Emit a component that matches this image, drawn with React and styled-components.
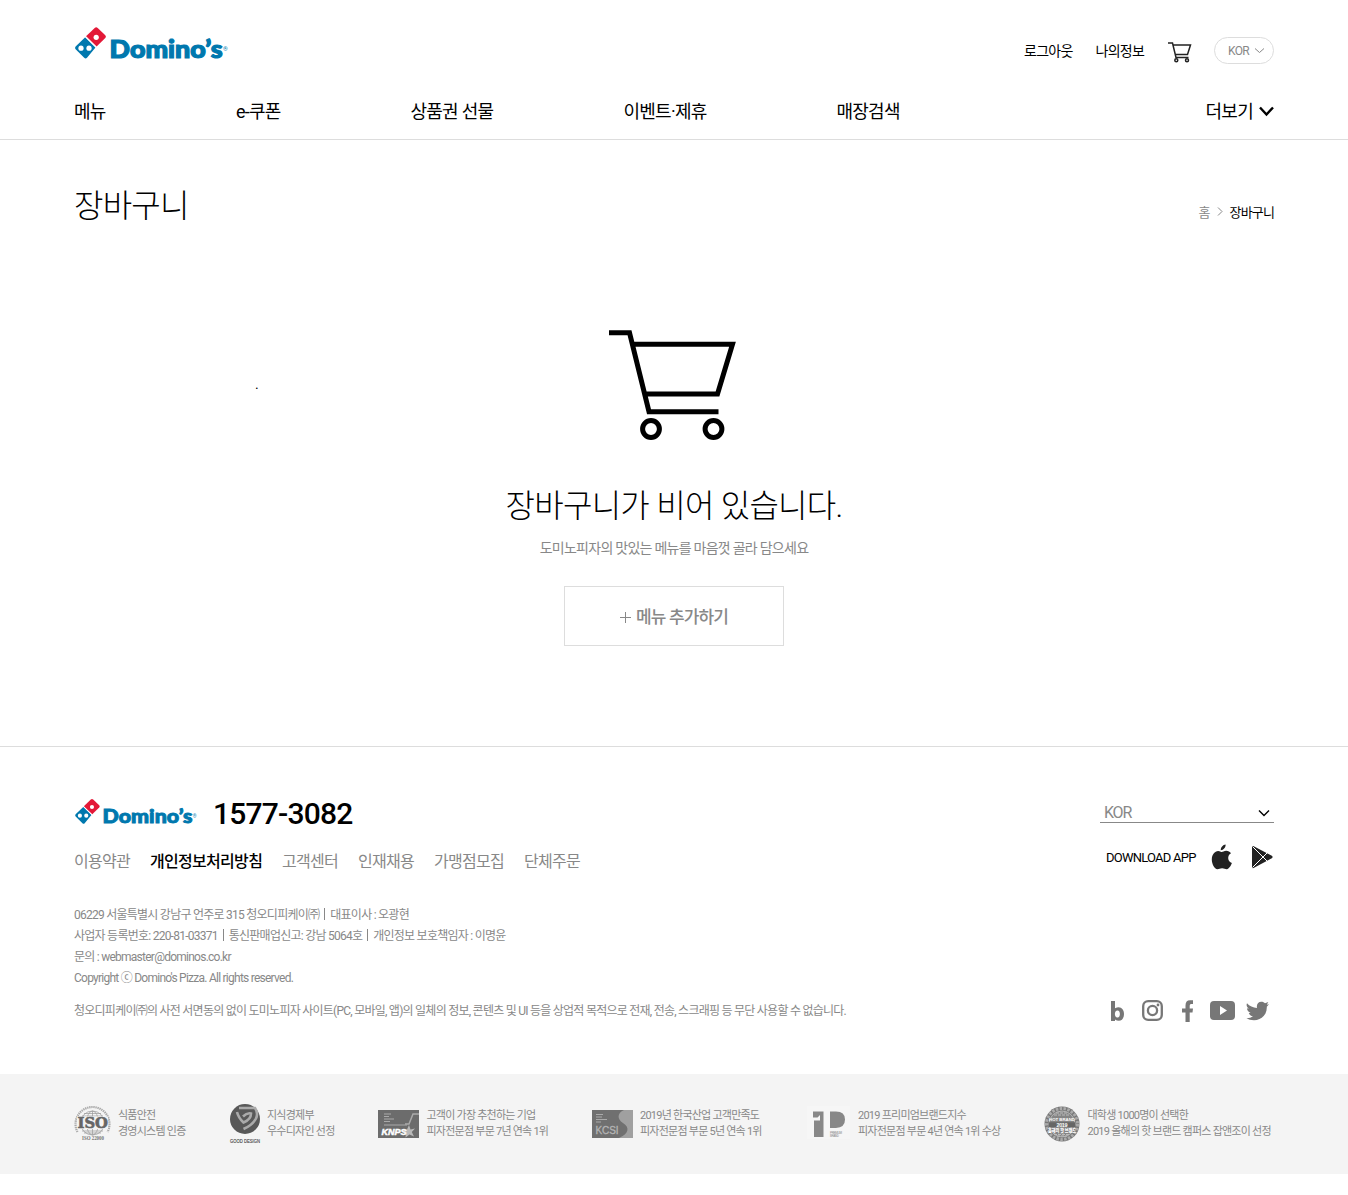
import React from "react";
import styled, { createGlobalStyle } from "styled-components";

const GlobalStyle = createGlobalStyle`
  * { box-sizing: border-box; }
  body {
    margin: 0;
    background: #fff;
    color: #000;
    font-family: Roboto, "Noto Sans CJK KR", sans-serif;
    font-size: 14px;
    letter-spacing: -0.05em;
  }
  a { color: inherit; text-decoration: none; }
  ul, p, h1, h2 { margin: 0; padding: 0; list-style: none; font-weight: 400; }
  svg { display: block; flex: none; overflow: visible; }
`;

const Page = styled.div`
  height: 1195px;
  overflow: hidden;
`;

const Container = styled.div`
  width: 1200px;
  margin: 0 auto;
`;

const Header = styled.header`
  height: 140px;
  border-bottom: 1px solid #ddd;
`;

const HeaderTop = styled(Container)`
  display: flex;
  justify-content: space-between;
  align-items: flex-start;
  height: 93px;
  padding-top: 26px;
`;

const UserMenu = styled.div`
  display: flex;
  align-items: center;
  height: 27px;
  margin-top: 11px;
  line-height: 27px;
  letter-spacing: -0.7px;
`;

const UserLink = styled.a`
  width: ${(p) => p.$width}px;
  padding-top: 1px;
  white-space: nowrap;
`;

const CartLink = styled.a`
  width: 46px;
  padding-top: 3px;
`;

const LangButton = styled.button`
  display: flex;
  align-items: center;
  gap: 5px;
  width: 60px;
  height: 27px;
  padding: 0 0 0 13px;
  border: 1px solid #ddd;
  border-radius: 14px;
  background: #fff;
  color: #888;
  font: 12px Roboto, sans-serif;
  letter-spacing: -0.7px;
`;

const Nav = styled(Container)`
  display: flex;
  font-size: 18px;
  line-height: 38px;
  letter-spacing: -0.75px;
`;

const NavItem = styled.a`
  width: ${(p) => p.$width}px;
  white-space: nowrap;
`;

const More = styled.a`
  display: flex;
  align-items: center;
  gap: 6px;
  margin-left: auto;
  svg { margin-top: -2px; }
`;

const TitleRow = styled(Container)`
  display: flex;
  justify-content: space-between;
  height: 190px;
  padding-top: 42px;
`;

const Title = styled.h1`
  font-size: 32px;
  font-weight: 300;
  line-height: 48px;
  letter-spacing: -0.8px;
`;

const Breadcrumb = styled.div`
  display: flex;
  align-items: center;
  gap: 7px;
  height: 20px;
  margin-top: 19px;
  font-size: 13px;
  letter-spacing: -0.85px;
  color: #888;
  strong { font-weight: 400; color: #000; }
`;

const Main = styled.main`
  height: 606px;
`;

const CartStage = styled(Container)`
  display: grid;
  grid-template-columns: 1fr 127px 1fr;
  padding-right: 3px;
`;

const StrayMark = styled.span`
  padding: 44px 0 0 181px;
  line-height: 20px;
`;

const Empty = styled.section`
  display: flex;
  flex-direction: column;
  align-items: center;
  padding-top: 41px;
`;

const EmptyTitle = styled.h2`
  font-size: 32px;
  font-weight: 300;
  line-height: 48px;
  letter-spacing: -0.72px;
`;

const EmptyText = styled.p`
  margin-top: 8px;
  line-height: 20px;
  letter-spacing: -0.74px;
  color: #888;
`;

const AddButton = styled.button`
  display: flex;
  align-items: center;
  justify-content: center;
  gap: 5px;
  width: 220px;
  height: 60px;
  margin-top: 28px;
  padding: 0 6px 2px;
  border: 1px solid #ddd;
  background: #fff;
  color: #888;
  font: 500 17px Roboto, "Noto Sans CJK KR", sans-serif;
  letter-spacing: -0.85px;
  svg { margin-top: 4px; }
`;

const Footer = styled.footer`
  border-top: 1px solid #ddd;
`;

const FooterBody = styled(Container)`
  display: flex;
  justify-content: space-between;
  height: 327px;
`;

const FooterInfo = styled.div`
  display: flex;
  flex-direction: column;
`;

const Brand = styled.div`
  display: flex;
  gap: 16px;
  height: 91px;
  padding-top: 51px;
`;

const Phone = styled.span`
  font-size: 30px;
  font-weight: 500;
  line-height: 32px;
  letter-spacing: -0.78px;
`;

const FooterLinks = styled.ul`
  display: flex;
  font-size: 16px;
  line-height: 24px;
  margin-top: 12px;
`;

const FooterLink = styled.li`
  width: ${(p) => p.$width}px;
  white-space: nowrap;
  font-weight: ${(p) => (p.$strong ? 500 : 400)};
  color: ${(p) => (p.$strong ? "#000" : "#888")};
`;

const Address = styled.div`
  margin-top: 31px;
  font-size: 12px;
  line-height: 21px;
  letter-spacing: -0.75px;
  color: #888;
  white-space: nowrap;
`;

const AddressLine = styled.p`
  height: 21px;
  display: flex;
  align-items: center;
`;

const Divider = styled.i`
  width: 1px;
  height: 12px;
  margin: -3px 5px 0;
  background: #888;
`;

const Notice = styled.p`
  margin-top: 12px;
  font-size: 12px;
  line-height: 21px;
  letter-spacing: -0.75px;
  color: #888;
  white-space: nowrap;
`;

const FooterSide = styled.div`
  display: flex;
  flex-direction: column;
  width: 174px;
  padding-top: 56px;
`;

const LangSelect = styled.div`
  display: flex;
  justify-content: space-between;
  align-items: center;
  height: 20px;
  padding: 0 4px;
  border-bottom: 1px solid #888;
  color: #888;
  font-size: 16px;
  letter-spacing: -1.2px;
`;

const Download = styled.div`
  display: flex;
  align-items: center;
  height: 28px;
  margin-top: 20px;
  padding-left: 6px;
  font-size: 13px;
  letter-spacing: -0.77px;
  white-space: nowrap;
`;

const DownloadLabel = styled.span`
  width: 105px;
`;

const AppleLink = styled.a`
  width: 41px;
`;

const Social = styled.div`
  display: flex;
  align-items: center;
  height: 24px;
  margin-top: 128px;
`;

const Awards = styled.div`
  height: 100px;
  background: #f4f4f4;
`;

const AwardRow = styled(Container)`
  display: flex;
`;

const Award = styled.div`
  display: flex;
  width: ${(p) => p.$width}px;
  padding-top: 29px;
`;

const AwardIcon = styled.div`
  width: ${(p) => p.$width}px;
  flex: none;
`;

const AwardText = styled.p`
  padding-top: 5px;
  font-size: 11px;
  line-height: 16px;
  letter-spacing: -0.76px;
  color: #888;
  white-space: pre;
`;

function Logo({ width, height }) {
  return (
    <svg width={width} height={height} viewBox="0 0 154 34">
      <path fill="#e31837" d="M12 10.3 20.7 1.9Q22.2 .6 23.7 1.9L31.3 9.2Q32.6 10.6 31.3 12L22.6 20.6Z" />
      <path fill="#0078ae" d="M11.2 11.2 21.5 21.5 13 31.8Q11.6 33.2 10.2 31.8L1.6 23.3Q.4 21.9 1.6 20.5Z" />
      <path stroke="#fff" strokeWidth="1.1" d="M11.2 10.4 22.5 21.6" />
      <circle cx="22.2" cy="11.3" r="2.6" fill="#fff" />
      <circle cx="7" cy="22.2" r="2.6" fill="#fff" />
      <circle cx="15" cy="22.2" r="2.6" fill="#fff" />
      <text x="35.6" y="32" textLength="113" lengthAdjust="spacingAndGlyphs" fill="#0078ae" stroke="#0078ae" strokeWidth="1.2" fontFamily="Lato, sans-serif" fontWeight="900" fontSize="24.5" letterSpacing="0">Domino’s</text>
      <text x="149" y="25" fill="#0078ae" fontFamily="Roboto, sans-serif" fontSize="6" letterSpacing="0">®</text>
    </svg>
  );
}

function BigCart() {
  return (
    <svg width="127" height="111" viewBox="0 0 127 111" fill="none" stroke="#000" strokeWidth="5">
      <path d="M0 2.7H20.5L40 81.7H109.5M24.5 14.2H123.5L108.5 64H37" />
      <circle cx="42" cy="99" r="8.4" />
      <circle cx="104.5" cy="99" r="8.4" />
    </svg>
  );
}

function SmallCart() {
  return (
    <svg width="24" height="21" viewBox="0 0 24 21" fill="none" stroke="#222" strokeWidth="1.5">
      <path d="M0 1H4.5L8 15.5H20.5M5 3H22.5L19.5 12.5H7" />
      <circle cx="8.3" cy="18.3" r="1.5" />
      <circle cx="19" cy="18.3" r="1.5" />
    </svg>
  );
}

function Chevron({ width, height, stroke, weight }) {
  return (
    <svg width={width} height={height} viewBox={`0 0 ${width} ${height}`} fill="none" stroke={stroke} strokeWidth={weight}>
      <path d={`M1 1.5 ${width / 2} ${height - 1.5} ${width - 1} 1.5`} />
    </svg>
  );
}

function AppleIcon() {
  return (
    <svg width="22" height="26" viewBox="0 0 22 26" fill="#222">
      <path d="M14.6 .6C14.9 3.3 12.6 6.2 9.8 6.3 9.5 3.5 12 .9 14.6 .6ZM10.7 8.1C11.8 8.1 13 6.8 15.2 6.8 17.2 6.8 19 7.8 20 9.3 15.8 11.8 16.6 17.5 20.9 19.1 19.8 22 17.9 25 15.9 25.2 14.2 25.3 13.3 24.3 11.1 24.3 8.9 24.3 8.2 25.2 6.5 25.2 3.4 25.1 .8 19.8 .8 15.4 .8 10.6 3.8 7 7.2 7 8.8 7 9.9 8.1 10.7 8.1Z" />
    </svg>
  );
}

function PlayIcon() {
  return (
    <svg width="21" height="24" viewBox="0 0 21 24">
      <path fill="#222" d="M0 1.8Q0 .5 1.3 1.1L16 8.8 19.8 10.8Q21.3 11.8 19.8 13.2L1.6 23Q0 23.6 0 22Z" />
      <path stroke="#fff" strokeWidth="1" d="M.5 1.5 15.5 16.5M.5 22.5 15.5 7.5" />
    </svg>
  );
}

function SocialIcons() {
  return (
    <svg width="174" height="24" viewBox="0 0 174 24" fill="#777">
      <path fillRule="evenodd" d="M11 2H15V9.2C20.5 6.5 24 10 24 15 24 21.5 19 23.5 15 20.5V22H11ZM17.5 11.5C14 11.5 14 18.5 17.5 18.5 20.7 18.5 20.7 11.5 17.5 11.5Z" />
      <g fill="none" stroke="#777" strokeWidth="2.3">
        <rect x="43.2" y="2.2" width="18.6" height="18.6" rx="5" />
        <circle cx="52.5" cy="11.5" r="4.6" />
      </g>
      <circle cx="58" cy="6" r="1.4" />
      <path d="M85.5 23V13.5H82V9.5H85.5V6.5Q85.5 1.2 90 1.2H93V5H91Q89.7 5 89.7 6.7V9.5H93L92.5 13.5H89.7V23Z" />
      <path fillRule="evenodd" d="M114 2H131Q135 2 135 6V17Q135 21 131 21H114Q110 21 110 17V6Q110 2 114 2ZM120 7V16L127 11.5Z" />
      <path d="M147 4.2C149.5 7 153 8.8 157 9 156.2 5 158.4 2.8 161.3 2.8 163 2.8 164.2 3.5 165 4.3L168.3 3.1 166.8 5.7 169 5.2 166.8 7.7C167.2 15.5 161.5 21.2 154 21.2 151 21.2 148.6 20.5 146.4 19.2 149 19.3 151.2 18.7 153 17.3 150.8 17 149.4 15.8 148.8 14L150.6 13.9C148.3 13 147.1 11.4 147 9.3L149 9.8C147 8.2 146 6.6 147 4.2Z" />
    </svg>
  );
}

const badgeFont = { fontFamily: "Liberation Sans, sans-serif", letterSpacing: 0 };

function IsoBadge() {
  return (
    <svg width="38" height="40" viewBox="0 0 38 40" {...badgeFont}>
      <g fill="none" stroke="#999" strokeWidth=".7">
        <circle cx="18.5" cy="20" r="12" />
        <ellipse cx="18.5" cy="20" rx="6" ry="12" />
        <path d="M18.5 8V32M8 13H29M8 28H29M10 10.5H27M10 30H27" />
        <path d="M3.5 29A17 17 0 1 1 33.5 29" strokeWidth="2.2" strokeDasharray="1.4 .7" stroke="#aaa" />
      </g>
      <rect x="3" y="13.5" width="31" height="12.5" fill="#f4f4f4" />
      <text x="3.5" y="25" fontFamily="DejaVu Serif, serif" fontWeight="700" fontSize="14.5" fill="#666" stroke="#666" strokeWidth=".6" textLength="30.5" lengthAdjust="spacingAndGlyphs">ISO</text>
      <text x="8" y="37.3" fontFamily="Liberation Serif, serif" fontSize="5.5" fontWeight="700" fill="#777" textLength="22" lengthAdjust="spacingAndGlyphs">ISO 22000</text>
    </svg>
  );
}

function DesignBadge() {
  return (
    <svg width="31" height="41" viewBox="0 0 31 41" {...badgeFont}>
      <circle cx="15" cy="16" r="15" fill="#585858" />
      <g fill="none" stroke="#aaa" strokeWidth="2.6">
        <path d="M9 5H25Q28.5 10 26 15.5 22.5 22 13.5 26" />
        <path d="M7 9Q8.5 15 13.5 19.5 21 16.5 21 10.5 17 9.5 13 13.5" />
      </g>
      <text x="0" y="39.8" fontSize="6" fill="#444" stroke="#444" strokeWidth=".15" textLength="30" lengthAdjust="spacingAndGlyphs">GOOD DESIGN</text>
    </svg>
  );
}

function KnpsBadge() {
  return (
    <svg width="41" height="36" viewBox="0 0 41 36" {...badgeFont}>
      <path fill="#6c6c6c" d="M0 7H41V35H0Z" />
      <path stroke="#aaa" strokeWidth="1" d="M6 11H13M6 13.5H11M6 16H16M6 18.5H12M6 22H29" />
      <path fill="none" stroke="#aaa" strokeWidth="1.5" d="M27 21H31L35 11H41" />
      <path fill="#b9b9b9" d="m31 22 1.5 4.5 4.5-1-3.2 3.5 2.2 4.5-4.5-2-4 3 .5-5-3.5-2.5 4.5-.5Z" />
      <text x="3.5" y="32" fontSize="9.5" fontWeight="700" fontStyle="italic" fill="#fff" stroke="#fff" strokeWidth=".5" textLength="25" lengthAdjust="spacingAndGlyphs">KNPS</text>
    </svg>
  );
}

function KcsiBadge() {
  return (
    <svg width="41" height="36" viewBox="0 0 41 36" {...badgeFont}>
      <path fill="#707070" d="M0 7H41V35H0Z" />
      <path fill="#a0a0a0" d="M41 7H32C25 10 25 16 31 20 38 24 37 31 27 35H41Z" />
      <path stroke="#aaa" strokeWidth="1" d="M4 11.5H11M4 14H10M4 16.5H15M4 19H9" />
      <text x="3.5" y="31" fontSize="10" fill="#b5b5b5" stroke="#b5b5b5" strokeWidth=".3" textLength="23">KCSI</text>
    </svg>
  );
}

function PremiumBadge() {
  return (
    <svg width="45" height="37" viewBox="0 0 45 37" {...badgeFont}>
      <path fill="#f6f6f6" d="M1 3H44V36H1Z" />
      <path fill="#888" d="M7 8.5H17.5V34H8V17.5H14V12L11.5 14.5H7Z" />
      <path fill="#888" d="M24 8.5H30Q39 8.5 39 16.5T30 25H24Z" />
      <text x="24" y="30.5" fontSize="3" fill="#888" textLength="12">PREMIUM</text>
      <text x="24" y="34" fontSize="3" fill="#888" textLength="9">BRAND</text>
    </svg>
  );
}

function BrandBadge() {
  return (
    <svg width="36" height="39" viewBox="0 0 36 39" {...badgeFont}>
      <circle cx="18" cy="21" r="17.5" fill="#777" />
      <circle cx="18" cy="21" r="15.5" fill="none" stroke="#aaa" strokeWidth="3" strokeDasharray="2.5 1.4" />
      <circle cx="18" cy="21" r="13" fill="#858585" stroke="#ccc" strokeWidth=".7" />
      <path stroke="#bbb" strokeWidth="1.2" d="M10 12H26M12 10H24M10 31.5H26M13 33H23" strokeDasharray="3 1" />
      <text x="5" y="18.3" fontSize="4" fontWeight="700" fill="#fff" textLength="26" lengthAdjust="spacingAndGlyphs">HOT BRAND</text>
      <path fill="#666" d="M5 19.3H31V24H5Z" />
      <text x="12.5" y="23.7" fontSize="5.5" fontWeight="700" fill="#fff" textLength="11">2019</text>
      <text x="4" y="29.3" fontFamily="Noto Sans CJK KR, sans-serif" fontSize="5" fontWeight="900" fill="#fff" textLength="28" lengthAdjust="spacingAndGlyphs">올해의 핫 브랜드</text>
    </svg>
  );
}

const navItems = [["메뉴", 162], ["e-쿠폰", 174.5], ["상품권 선물", 213], ["이벤트·제휴", 213], ["매장검색", 100]];

const footerLinks = [["이용약관", 76], ["개인정보처리방침", 132, true], ["고객센터", 76], ["인재채용", 76], ["가맹점모집", 90], ["단체주문", 70]];

const awards = [
  [156, 44, IsoBadge, "식품안전\n경영시스템 인증"],
  [148, 37, DesignBadge, "지식경제부\n우수디자인 선정"],
  [214, 48.5, KnpsBadge, "고객이 가장 추천하는 기업\n피자전문점 부문 7년 연속 1위"],
  [214, 48, KcsiBadge, "2019년 한국산업 고객만족도\n피자전문점 부문 5년 연속 1위"],
  [238, 52, PremiumBadge, "2019 프리미엄브랜드지수\n피자전문점 부문 4년 연속 1위 수상"],
  [230, 43.5, BrandBadge, "대학생 1000명이 선택한\n2019 올해의 핫 브랜드 캠퍼스 잡앤조이 선정"],
];

export default function App() {
  return (
    <Page>
      <GlobalStyle />
      <Header>
        <HeaderTop>
          <Logo width={154} height={34} />
          <UserMenu>
            <UserLink $width={71.5}>로그아웃</UserLink>
            <UserLink $width={72.5}>나의정보</UserLink>
            <CartLink><SmallCart /></CartLink>
            <LangButton>KOR <Chevron width={11} height={7} stroke="#888" weight={1} /></LangButton>
          </UserMenu>
        </HeaderTop>
        <Nav as="nav">
          {navItems.map(([label, width]) => <NavItem key={label} $width={width}>{label}</NavItem>)}
          <More>더보기 <Chevron width={15} height={10} stroke="#000" weight={2.4} /></More>
        </Nav>
      </Header>
      <Main>
        <TitleRow>
          <Title>장바구니</Title>
          <Breadcrumb>
            <span>홈</span>
            <svg width="6" height="9" viewBox="0 0 6 9" fill="none" stroke="#888"><path d="M1 .5 5 4.5 1 8.5" /></svg>
            <strong>장바구니</strong>
          </Breadcrumb>
        </TitleRow>
        <CartStage>
          <StrayMark>.</StrayMark>
          <BigCart />
        </CartStage>
        <Empty>
          <EmptyTitle>장바구니가 비어 있습니다.</EmptyTitle>
          <EmptyText>도미노피자의 맛있는 메뉴를 마음껏 골라 담으세요</EmptyText>
          <AddButton>
            <svg width="11" height="11" viewBox="0 0 11 11" stroke="#888"><path d="M5.5 0V11M0 5.5H11" /></svg>
            메뉴 추가하기
          </AddButton>
        </Empty>
      </Main>
      <Footer>
        <FooterBody>
          <FooterInfo>
            <Brand>
              <Logo width={123} height={27} />
              <Phone>1577-3082</Phone>
            </Brand>
            <FooterLinks>
              {footerLinks.map(([label, width, strong]) => (
                <FooterLink key={label} $width={width} $strong={strong}>{label}</FooterLink>
              ))}
            </FooterLinks>
            <Address>
              <AddressLine>06229 서울특별시 강남구 언주로 315 청오디피케이㈜<Divider />대표이사 : 오광현</AddressLine>
              <AddressLine>사업자 등록번호: 220-81-03371<Divider />통신판매업신고: 강남 5064호<Divider />개인정보 보호책임자 : 이명윤</AddressLine>
              <AddressLine>문의 : webmaster@dominos.co.kr</AddressLine>
              <AddressLine>Copyright ⓒ Domino's Pizza. All rights reserved.</AddressLine>
            </Address>
            <Notice>청오디피케이㈜의 사전 서면동의 없이 도미노피자 사이트(PC, 모바일, 앱)의 일체의 정보, 콘텐츠 및 UI 등을 상업적 목적으로 전재, 전송, 스크래핑 등 무단 사용할 수 없습니다.</Notice>
          </FooterInfo>
          <FooterSide>
            <LangSelect>KOR <Chevron width={12} height={8} stroke="#000" weight={1.4} /></LangSelect>
            <Download>
              <DownloadLabel>DOWNLOAD APP</DownloadLabel>
              <AppleLink><AppleIcon /></AppleLink>
              <PlayIcon />
            </Download>
            <Social><SocialIcons /></Social>
          </FooterSide>
        </FooterBody>
        <Awards>
          <AwardRow>
            {awards.map(([width, iconWidth, Icon, text]) => (
              <Award key={text} $width={width}>
                <AwardIcon $width={iconWidth}><Icon /></AwardIcon>
                <AwardText>{text}</AwardText>
              </Award>
            ))}
          </AwardRow>
        </Awards>
      </Footer>
    </Page>
  );
}
